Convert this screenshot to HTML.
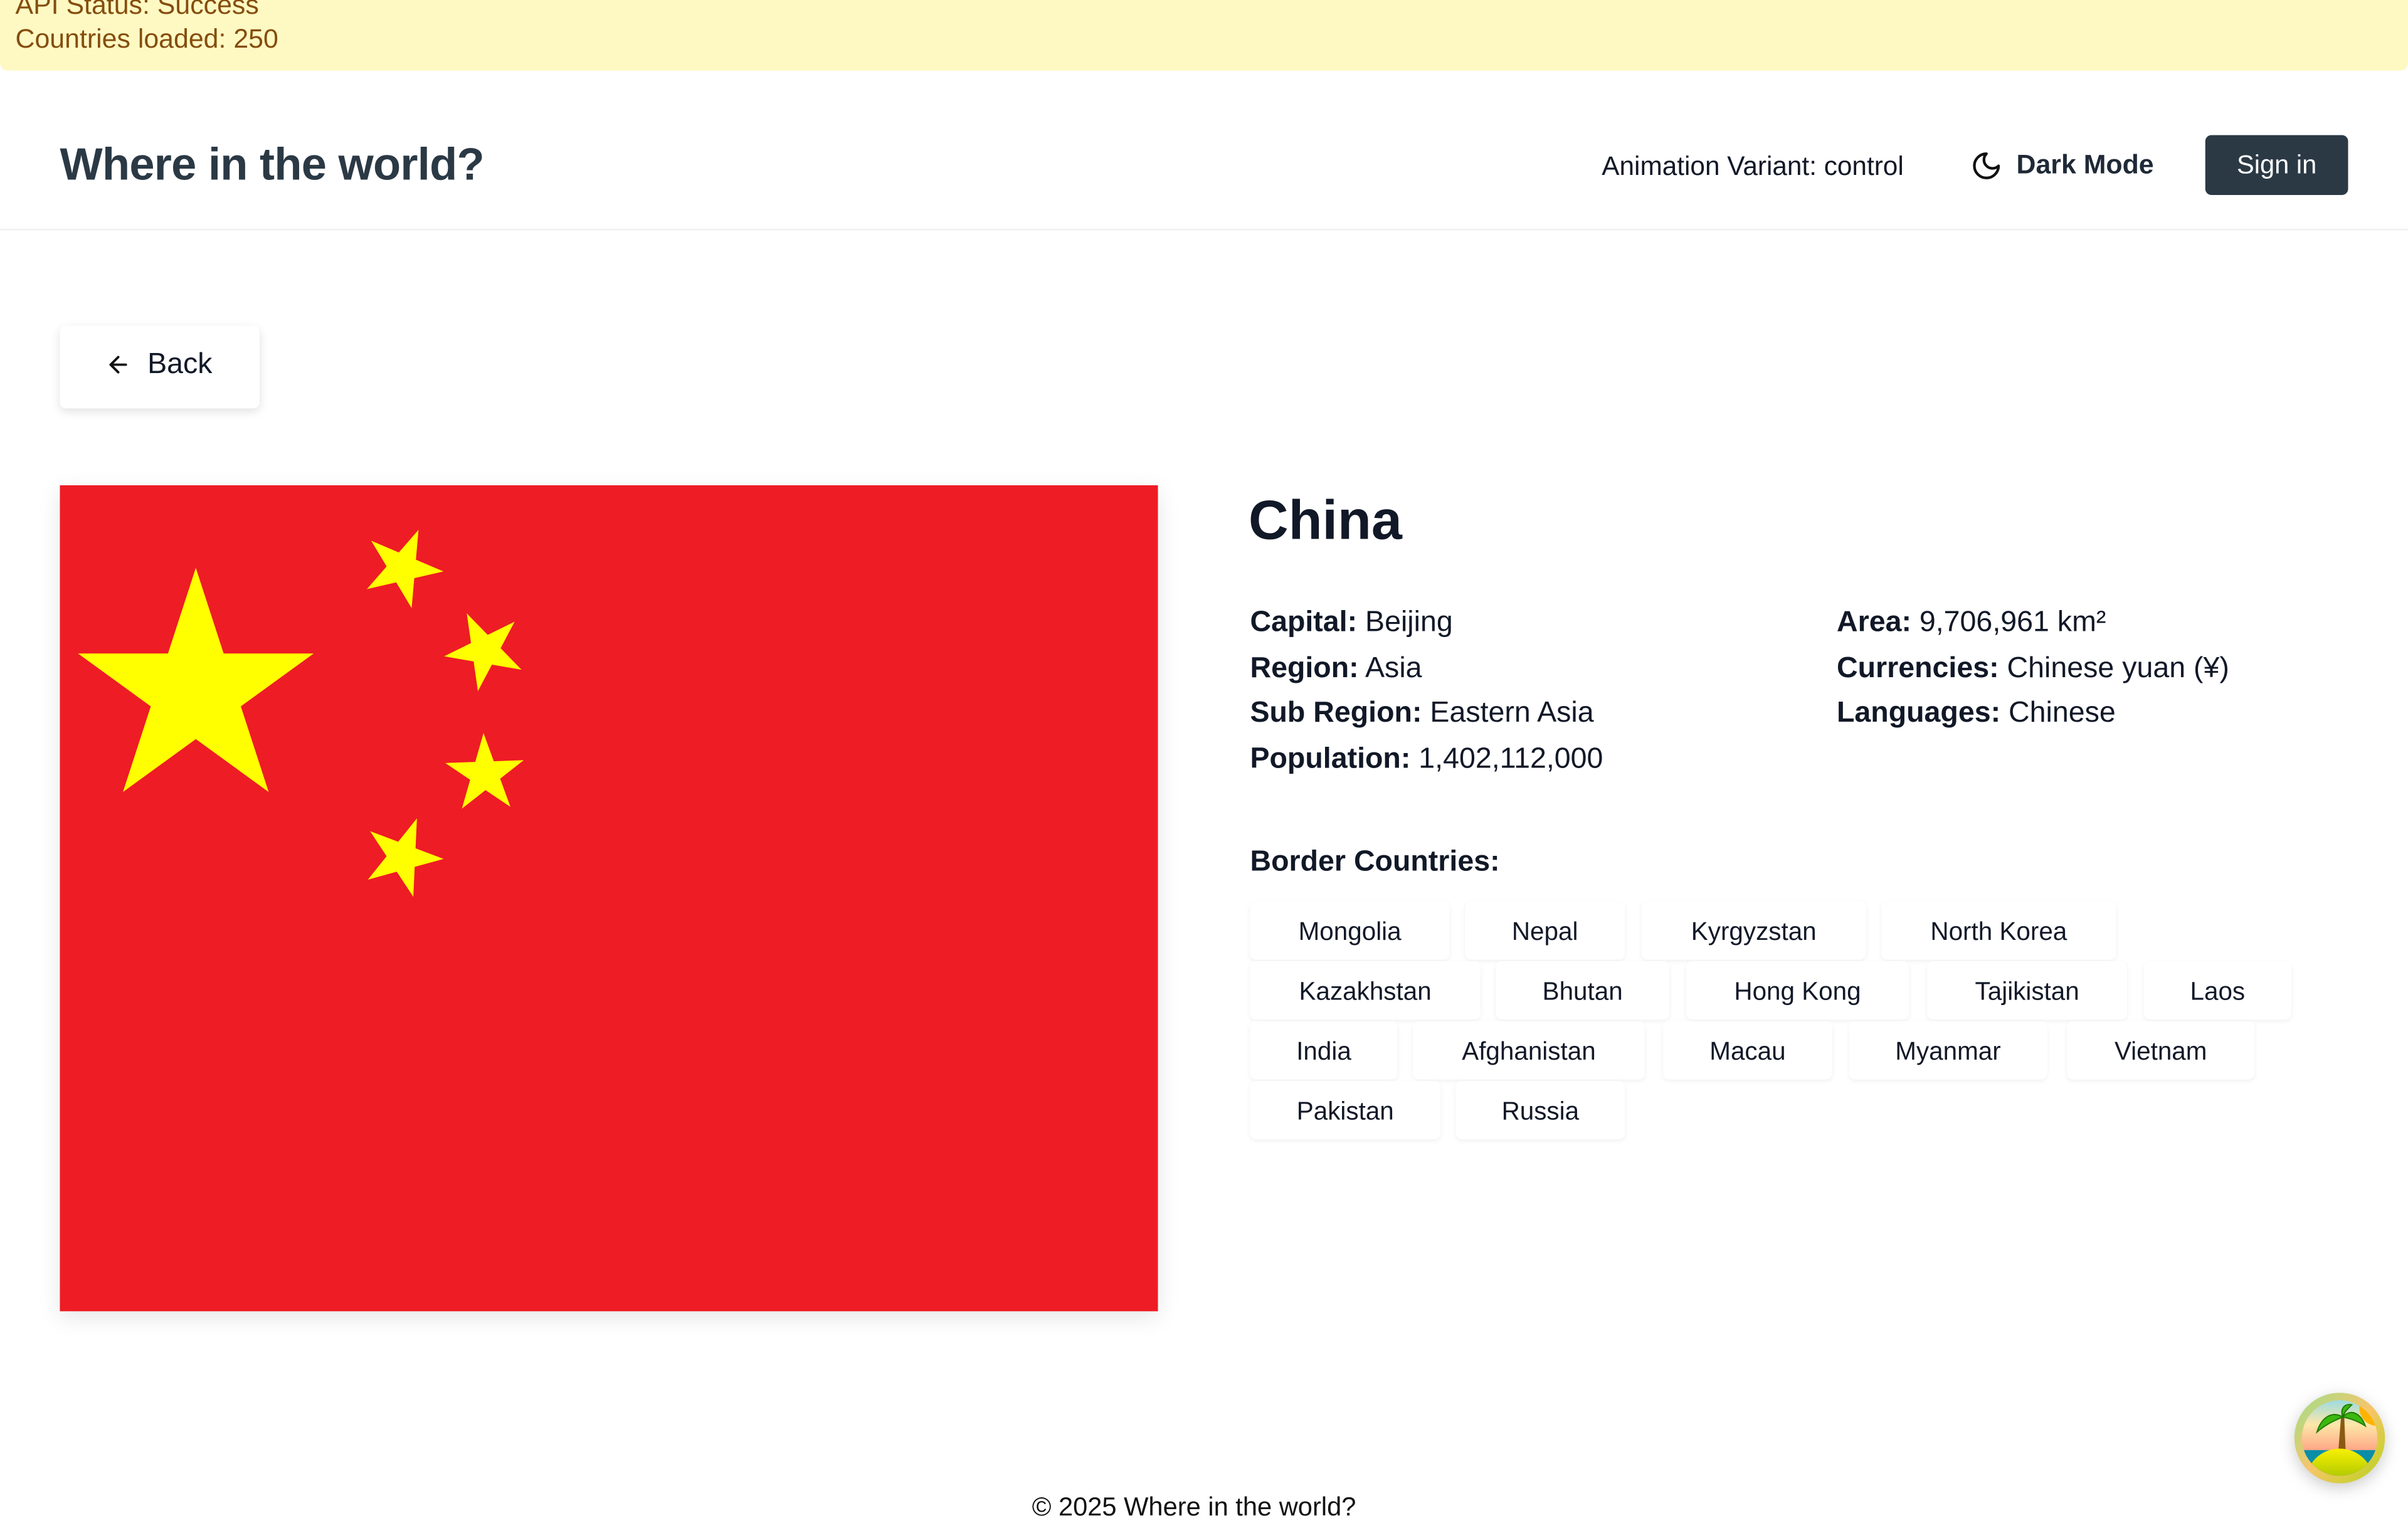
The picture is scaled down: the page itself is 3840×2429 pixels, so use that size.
<!DOCTYPE html>
<html><head><meta charset="utf-8"><style>
html,body{margin:0;padding:0;width:3840px;height:2400px;overflow:hidden;background:#fff}
#w{position:absolute;left:0;top:0;width:1568px;height:980px;transform:scale(2.44898);transform-origin:0 0;font-family:"Liberation Sans",sans-serif;color:#111827}
.a{position:absolute;white-space:nowrap}
.tag{position:absolute;height:38px;line-height:40px;text-align:center;font-size:16.5px;background:#fff;border-radius:4px;box-shadow:0 1px 3px rgba(0,0,0,.06)}
.info{font-size:19px;line-height:29.5px}
.info b{font-weight:700}
</style></head><body><div id="w">
<div class="a" style="left:0;top:0;width:1568px;height:46px;background:#fef9c3;border-radius:0 0 5px 5px"></div>
<div class="a" style="left:10px;top:-7px;font-size:17.5px;color:#854d0e">API Status: Success</div>
<div class="a" style="left:10px;top:15px;font-size:17.5px;color:#854d0e">Countries loaded: 250</div>
<div class="a" style="left:0;top:149px;width:1568px;height:1px;background:#eef0f2"></div>
<div class="a" style="left:39px;top:91px;font-size:29.5px;font-weight:700;color:#2b3945;letter-spacing:-0.3px">Where in the world?</div>
<div class="a" style="left:1043px;top:98px;font-size:17.3px">Animation Variant: control</div>
<svg class="a" style="left:1283px;top:97px" width="21" height="22" viewBox="0 0 24 24" fill="none" stroke="#111" stroke-width="2" stroke-linecap="round" stroke-linejoin="round"><path d="M12 3a6 6 0 0 0 9 9 9 9 0 1 1-9-9Z"/></svg>
<div class="a" style="left:1313px;top:97px;font-size:17.5px;font-weight:700;color:#1f2937">Dark Mode</div>
<div class="a" style="left:1436px;top:88px;width:93px;height:39px;background:#2b3945;border-radius:4px;color:#fff;font-size:17px;line-height:40px;text-align:center">Sign in</div>
<div class="a" style="left:39px;top:212px;width:130px;height:54px;background:#fff;border-radius:4px;box-shadow:0 2px 6px rgba(0,0,0,.12)"></div>
<svg class="a" style="left:68px;top:229px" width="18" height="17" viewBox="0 0 24 24" fill="none" stroke="#111" stroke-width="2.2" stroke-linecap="round" stroke-linejoin="round"><path d="M19 12H5M12 19l-7-7 7-7"/></svg>
<div class="a" style="left:96px;top:227px;font-size:19px">Back</div>
<svg class="a" style="left:39px;top:316px;box-shadow:0 4px 14px rgba(0,0,0,.1)" width="715" height="538" viewBox="0 0 30 20" preserveAspectRatio="xMidYMid slice">
<defs><path id="s" d="M0,-1 0.587785,0.809017 -0.951057,-0.309017H0.951057L-0.587785,0.809017z" fill="#ff0"/></defs>
<rect width="30" height="20" fill="#ee1c25"/>
<use href="#s" transform="translate(5,5) scale(3)"/>
<use href="#s" transform="translate(10,2) rotate(23.036243)"/>
<use href="#s" transform="translate(12,4) rotate(45.869898)"/>
<use href="#s" transform="translate(12,7) rotate(69.945396)"/>
<use href="#s" transform="translate(10,9) rotate(20.659808)"/>
</svg>
<div class="a" style="left:813px;top:318px;font-size:36px;font-weight:700">China</div>
<div class="a info" style="left:814px;top:391px"><b>Capital:</b> Beijing<br><b>Region:</b> Asia<br><b>Sub Region:</b> Eastern Asia<br><b>Population:</b> 1,402,112,000</div>
<div class="a info" style="left:1196px;top:391px"><b>Area:</b> 9,706,961 km²<br><b>Currencies:</b> Chinese yuan (¥)<br><b>Languages:</b> Chinese</div>
<div class="a" style="left:814px;top:551px;font-size:19px;font-weight:700">Border Countries:</div>
<div class="tag" style="left:814px;top:587px;width:130px">Mongolia</div>
<div class="tag" style="left:954px;top:587px;width:104px">Nepal</div>
<div class="tag" style="left:1069px;top:587px;width:146px">Kyrgyzstan</div>
<div class="tag" style="left:1225px;top:587px;width:153px">North Korea</div>
<div class="tag" style="left:814px;top:626px;width:150px">Kazakhstan</div>
<div class="tag" style="left:974px;top:626px;width:113px">Bhutan</div>
<div class="tag" style="left:1098px;top:626px;width:145px">Hong Kong</div>
<div class="tag" style="left:1255px;top:626px;width:130px">Tajikistan</div>
<div class="tag" style="left:1396px;top:626px;width:96px">Laos</div>
<div class="tag" style="left:814px;top:665px;width:96px">India</div>
<div class="tag" style="left:920px;top:665px;width:151px">Afghanistan</div>
<div class="tag" style="left:1083px;top:665px;width:110px">Macau</div>
<div class="tag" style="left:1204px;top:665px;width:129px">Myanmar</div>
<div class="tag" style="left:1346px;top:665px;width:122px">Vietnam</div>
<div class="tag" style="left:814px;top:704px;width:124px">Pakistan</div>
<div class="tag" style="left:948px;top:704px;width:110px">Russia</div>
<div class="a" style="left:672px;top:972px;font-size:17px;color:#111">© 2025 Where in the world?</div>
<svg class="a" style="left:1494px;top:907px;filter:drop-shadow(0 3px 5px rgba(0,0,0,.2))" width="59" height="59" viewBox="0 0 60 60">
<defs><linearGradient id="r" x1="0" y1="0" x2="1" y2="1"><stop offset="0" stop-color="#9be08a"/><stop offset=".5" stop-color="#f7c56b"/><stop offset="1" stop-color="#b6d416"/></linearGradient>
<linearGradient id="sk" x1="0" y1="0" x2="0" y2="1"><stop offset="0" stop-color="#7fd8f0"/><stop offset=".35" stop-color="#fde7a8"/><stop offset=".75" stop-color="#ff8c78"/></linearGradient>
<linearGradient id="h" x1="0" y1="0" x2="0" y2="1"><stop offset="0" stop-color="#f8f000"/><stop offset="1" stop-color="#5a9a00"/></linearGradient>
<clipPath id="c"><circle cx="30" cy="30" r="25"/></clipPath></defs>
<circle cx="30" cy="30" r="30" fill="url(#r)"/>
<g clip-path="url(#c)"><rect width="60" height="60" fill="url(#sk)"/>
<circle cx="55" cy="10" r="12" fill="#ffb300"/>
<rect x="0" y="38" width="60" height="22" fill="#0a8ea8"/>
<path d="M29 40 L31 15 L33 15 L34 40Z" fill="#8a5a12"/>
<path d="M32 16 C25 12 18 16 15 26 C22 20 28 18 32 16 Z M32 16 C38 10 44 14 47 22 C41 18 36 17 32 16Z M32 16 C30 10 34 7 38 8 C35 11 33 13 32 16Z" fill="#3cb80f" stroke="#1f7a00" stroke-width=".8"/>
<ellipse cx="30" cy="58" rx="22" ry="21" fill="url(#h)"/></g>
</svg>
</div></body></html>
